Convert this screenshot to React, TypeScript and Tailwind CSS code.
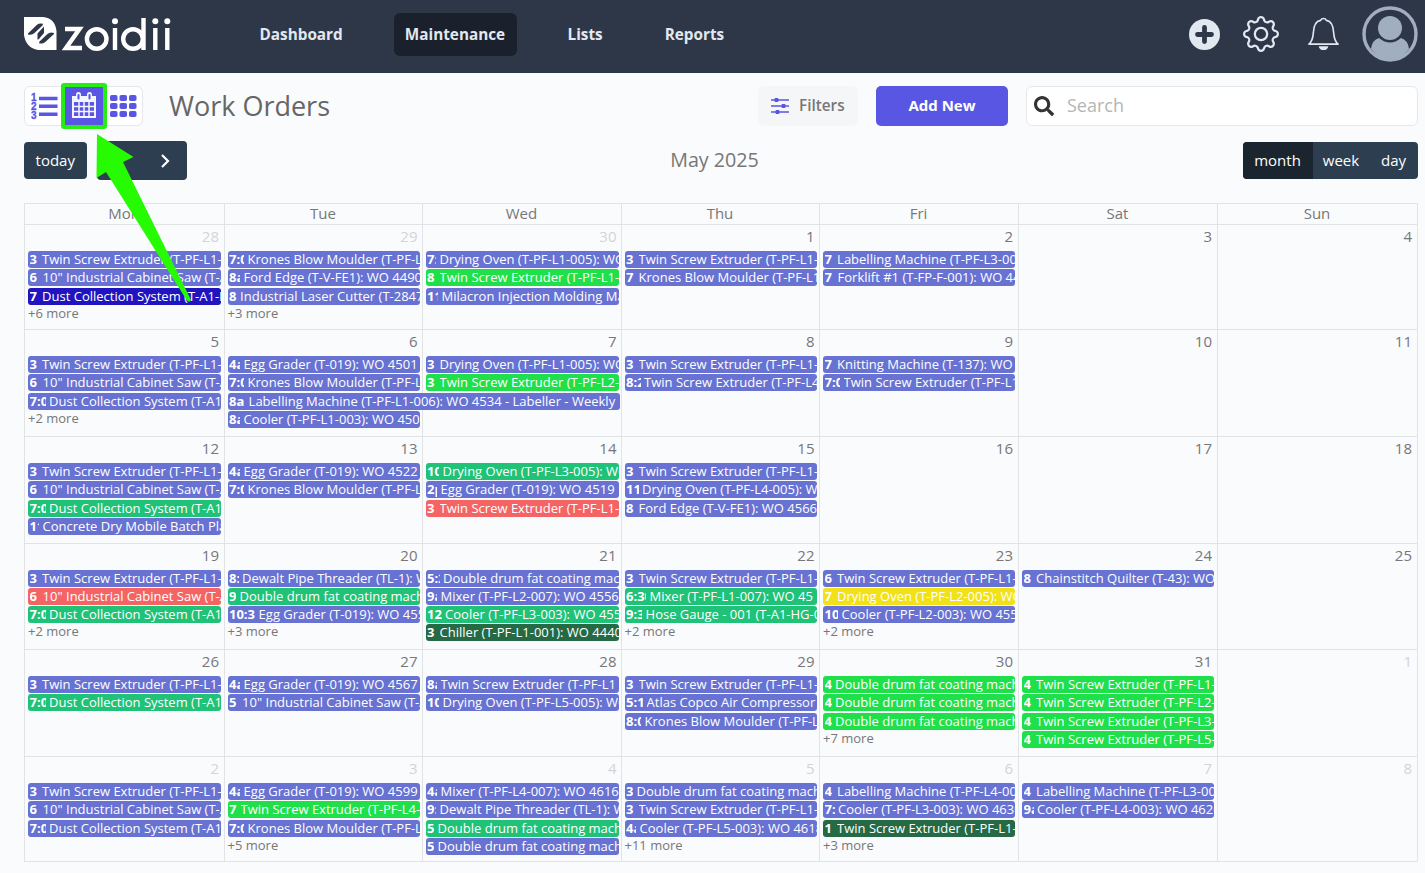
import React from "react";
import { FaSearch } from "react-icons/fa";
import { BsGear } from "react-icons/bs";

type Color = "b" | "g" | "t" | "n" | "r" | "y" | "d";
const BG: Record<Color, string> = {
  b: "bg-[#6772d2]",
  g: "bg-[#1fdf4a]",
  t: "bg-[#1fc277]",
  n: "bg-[#1f14c0]",
  r: "bg-[#f46464]",
  y: "bg-[#f2e116]",
  d: "bg-[#256a45]",
};
// colour, start time, visible width of the time, title, optional column span
type Ev = [Color, string, number, string, number?];
type Day = { n: number; out?: boolean; more?: number; ev?: Ev[] };

const TWIN = "Twin Screw Extruder (T-PF-L1-001): WO";
const twin = (l: number) => `Twin Screw Extruder (T-PF-L${l}-001): WO`;
const SAW = '10" Industrial Cabinet Saw (T-A1-002)';
const DUST = "Dust Collection System (T-A1-DC): WO";
const KRONES = "Krones Blow Moulder (T-PF-L1-002): WO";
const DRUM = "Double drum fat coating machine (T-PF)";

const WEEKS: Day[][] = [
  [
    { n: 28, out: true, more: 6, ev: [["b", "3", 9, TWIN], ["b", "6", 9.5, SAW], ["n", "7", 9, DUST]] },
    { n: 29, out: true, more: 3, ev: [["b", "7:00", 15, KRONES], ["b", "8a", 11, "Ford Edge (T-V-FE1): WO 4490 - Ford"], ["b", "8", 7.5, "Industrial Laser Cutter (T-2847): WO"]] },
    { n: 30, out: true, ev: [["b", "7:", 9, "Drying Oven (T-PF-L1-005): WO 4500"], ["g", "8", 9, TWIN], ["b", "11", 11, "Milacron Injection Molding Machine"]] },
    { n: 1, ev: [["b", "3", 9, TWIN], ["b", "7", 9, KRONES]] },
    { n: 2, ev: [["b", "7", 9, "Labelling Machine (T-PF-L3-006): WO"], ["b", "7", 9.5, "Forklift #1 (T-FP-F-001): WO 4498"]] },
    { n: 3 },
    { n: 4 },
  ],
  [
    { n: 5, more: 2, ev: [["b", "3", 9, TWIN], ["b", "6", 9.5, SAW], ["b", "7:00", 16, DUST]] },
    { n: 6, ev: [["b", "4a", 11, "Egg Grader (T-019): WO 4501 - Egg"], ["b", "7:00", 15, KRONES], ["b", "8a", 16, "Labelling Machine (T-PF-L1-006): WO 4534 - Labeller - Weekly", 2], ["b", "8a", 11, "Cooler (T-PF-L1-003): WO 4503"]] },
    { n: 7, ev: [["b", "3", 9, "Drying Oven (T-PF-L1-005): WO 4502"], ["g", "3", 9, twin(2)]] },
    { n: 8, ev: [["b", "3", 9, TWIN], ["b", "8:20", 14.5, twin(4)]] },
    { n: 9, ev: [["b", "7", 9, "Knitting Machine (T-137): WO 4510"], ["b", "7:00", 15.5, twin(1)]] },
    { n: 10 },
    { n: 11 },
  ],
  [
    { n: 12, ev: [["b", "3", 9, TWIN], ["b", "6", 9.5, SAW], ["t", "7:00", 16, DUST], ["b", "11", 9.5, "Concrete Dry Mobile Batch Plant"]] },
    { n: 13, ev: [["b", "4a", 11, "Egg Grader (T-019): WO 4522 - Egg"], ["b", "7:00", 15, KRONES]] },
    { n: 14, ev: [["t", "10", 12, "Drying Oven (T-PF-L3-005): WO 4530"], ["b", "2p", 10, "Egg Grader (T-019): WO 4519"], ["r", "3", 9, TWIN]] },
    { n: 15, ev: [["b", "3", 9, TWIN], ["b", "11", 12.5, "Drying Oven (T-PF-L4-005): WO 4540"], ["b", "8", 9, "Ford Edge (T-V-FE1): WO 4566 - Ford"]] },
    { n: 16 },
    { n: 17 },
    { n: 18 },
  ],
  [
    { n: 19, more: 2, ev: [["b", "3", 9, TWIN], ["r", "6", 9.5, SAW], ["t", "7:00", 16, DUST]] },
    { n: 20, more: 3, ev: [["b", "8:", 9.5, "Dewalt Pipe Threader (TL-1): WO 45"], ["t", "9", 7, DRUM], ["b", "10:30", 26, "Egg Grader (T-019): WO 4553"]] },
    { n: 21, ev: [["b", "5:20", 12.5, DRUM], ["b", "9a", 10, "Mixer (T-PF-L2-007): WO 4556"], ["t", "12", 14.5, "Cooler (T-PF-L3-003): WO 4559"], ["d", "3", 9, "Chiller (T-PF-L1-001): WO 4440"]] },
    { n: 22, more: 2, ev: [["b", "3", 9, TWIN], ["t", "6:30", 20, "Mixer (T-PF-L1-007): WO 45"], ["t", "9:30", 16, "Hose Gauge - 001 (T-A1-HG-001)"]] },
    { n: 23, more: 2, ev: [["b", "6", 9, TWIN], ["y", "7", 9, "Drying Oven (T-PF-L2-005): WO 4550"], ["b", "10", 13.5, "Cooler (T-PF-L2-003): WO 4555"]] },
    { n: 24, ev: [["b", "8", 9, "Chainstitch Quilter (T-43): WO 4560"]] },
    { n: 25 },
  ],
  [
    { n: 26, ev: [["b", "3", 9, TWIN], ["t", "7:00", 16, DUST]] },
    { n: 27, ev: [["b", "4a", 11, "Egg Grader (T-019): WO 4567 - Egg"], ["b", "5", 9.5, SAW]] },
    { n: 28, ev: [["b", "8a", 10, "Twin Screw Extruder (T-PF-L1"], ["b", "10", 12, "Drying Oven (T-PF-L5-005): WO 4570"]] },
    { n: 29, ev: [["b", "3", 9, TWIN], ["b", "5:15", 17, "Atlas Copco Air Compressor"], ["b", "8:00", 15, KRONES]] },
    { n: 30, more: 7, ev: [["g", "4", 7, DRUM], ["g", "4", 7, DRUM], ["g", "4", 7, DRUM]] },
    { n: 31, ev: [["g", "4", 9, twin(1)], ["g", "4", 9, twin(2)], ["g", "4", 9, twin(3)], ["g", "4", 9, twin(5)]] },
    { n: 1, out: true },
  ],
  [
    { n: 2, out: true, ev: [["b", "3", 9, TWIN], ["b", "6", 9.5, SAW], ["b", "7:00", 16, DUST]] },
    { n: 3, out: true, more: 5, ev: [["b", "4a", 11, "Egg Grader (T-019): WO 4599 - Egg"], ["g", "7", 8, twin(4)], ["b", "7:00", 15, KRONES]] },
    { n: 4, out: true, ev: [["b", "4a", 10, "Mixer (T-PF-L4-007): WO 4616"], ["b", "9:", 9, "Dewalt Pipe Threader (TL-1): WO 46"], ["t", "5", 7, DRUM], ["b", "5", 7, DRUM]] },
    { n: 5, out: true, more: 11, ev: [["b", "3", 7, DRUM], ["b", "3", 9, TWIN], ["b", "4a", 10, "Cooler (T-PF-L5-003): WO 4618"]] },
    { n: 6, out: true, more: 3, ev: [["b", "4", 9, "Labelling Machine (T-PF-L4-006): WO"], ["b", "7:", 10, "Cooler (T-PF-L3-003): WO 4630"], ["d", "1", 9, TWIN]] },
    { n: 7, out: true, ev: [["b", "4", 9, "Labelling Machine (T-PF-L3-006): WO"], ["b", "9a", 10, "Cooler (T-PF-L4-003): WO 4620"]] },
    { n: 8, out: true },
  ],
];

const COLS = "grid grid-cols-[200px_198px_199px_198px_199px_199px_200px]";

function Event({ ev }: { ev: Ev }) {
  const [color, time, width, title, span] = ev;
  return (
    <div
      className={`${BG[color]} ${span ? "relative z-10 w-[392px]" : ""} mb-[1.3px] flex h-[17px] shrink-0 overflow-hidden rounded-[3px] pl-[1.500px] text-[13px] leading-[17px] whitespace-nowrap text-white`}
    >
      <span className="shrink-0 overflow-hidden font-bold" style={{ width }}>{time}</span>
      <span className="ml-[3.600px] min-w-0 flex-1 overflow-hidden">{title}</span>
    </div>
  );
}

function Logo() {
  return (
    <svg width="148" height="40" viewBox="0 0 148 40" className="block" fill="none">
      <path d="M0 3H19Q31 4 32.500 17V36H14Q2 34 0 21Z" fill="#fff" />
      <g fill="#2d3748">
        <path d="M4 19.500 13 10.800Q15 9 19 9.700L18.500 11.500 10.500 19Q8 21.500 4 20.500Z" />
        <path d="M20 12.500V19L14.500 25.500Q13 26 13.500 24V19.500Z" />
        <path d="M30 20 21 28.200Q19 30 15 29.300L15.500 27.500 23.500 20Q26 17.500 30 19Z" />
      </g>
      <g stroke="#fff" strokeWidth="4.400">
        <path d="M41 15H55.500L42 34H58" />
        <circle cx="72.700" cy="25" r="9.800" />
        <path d="M91 14V36M131.300 14V36M143.300 14V36M119.500 4V36" />
        <circle cx="109" cy="25" r="9.800" />
      </g>
      <g fill="#fff">
        <circle cx="91" cy="7.300" r="3" />
        <circle cx="131.300" cy="7.300" r="3" />
        <circle cx="143.300" cy="7.300" r="3" />
      </g>
    </svg>
  );
}

function NumberedList() {
  return (
    <svg className="ml-[5px] shrink-0" width="28" height="28" viewBox="0 0 28 28" fill="currentColor">
      <path d="M9 4.800H27.500V8.300H9ZM9 12.600H27.500V16.100H9ZM9 20.400H27.500V23.900H9Z" />
      <g className="font-['Liberation_Sans',sans-serif] text-[10px] font-bold" stroke="currentColor" strokeWidth="0.300">
        <text x="1" y="8.800">1</text>
        <text x="1" y="18">2</text>
        <text x="1" y="27.200">3</text>
      </g>
    </svg>
  );
}

export default function App() {
  return (
    <div className="relative h-[873px] w-[1425px] overflow-hidden bg-[#fafbfd] font-['Open_Sans','Noto_Sans',sans-serif] text-[#666]">
      <header className="flex h-[72.500px] items-center justify-between bg-[#2d3748] pr-[7.500px] pl-[23.500px]">
        <div className="flex items-center pb-1">
          <Logo />
          <nav className="ml-[64px] flex items-center text-[15.300px] font-bold text-[#e2e8f0]">
            <span className="w-[158px] pl-[24px]">Dashboard</span>
            <span className="flex h-[43px] w-[123px] items-center justify-center rounded-md bg-[#1a202c]">Maintenance</span>
            <span className="ml-[51px]">Lists</span>
            <span className="ml-[62px]">Reports</span>
          </nav>
        </div>
        <div className="flex items-center pb-1">
          <svg width="31" height="31" viewBox="0 0 31 31"><circle cx="15.500" cy="15.500" r="15.500" fill="#e2e8f0" /><path d="M15.500 8.500V22.500M8.500 15.500H22.500" stroke="#2d3748" strokeWidth="4.800" strokeLinecap="round" /></svg>
          <BsGear className="ml-[23px] size-9 text-[#e2e8f0]" />
          <svg className="ml-7" width="33" height="36" viewBox="0 0 34 36" fill="none"><path d="M2 28.500Q6 25 6.500 17Q7 5 14 4Q15 2 17 2Q19 2 20 4Q27 5 27.500 17Q28 25 32 28.500Z" stroke="#e2e8f0" strokeWidth="1.700" strokeLinejoin="round" /><path d="M12 30.500H22Q21 34.500 17 34.500Q13 34.500 12 30.500" fill="#e2e8f0" /></svg>
          <svg className="ml-[22px]" width="56" height="56" viewBox="0 0 56 56"><circle cx="28" cy="28" r="26" fill="none" stroke="#a0aec0" strokeWidth="3.400" /><circle cx="28" cy="22" r="12" fill="#a0aec0" /><path d="M9 43Q10 34 17 32Q28 41 39 32Q46 34 47 43Q39 54 28 54Q17 54 9 43" fill="#a0aec0" /></svg>
        </div>
      </header>

      <section className="mt-[12.500px] flex h-[41px] items-center pr-[7px] pl-6">
        <div className="flex h-10 w-[119px] items-center rounded-md border border-[#e5e7eb] bg-white text-[#5956e4]">
          <NumberedList />
          <div className="ml-[3px] flex h-[46px] w-[46px] shrink-0 items-center justify-center rounded-[3px] border-4 border-[#27ee12] bg-[#5956e4]">
            <svg width="26" height="27" viewBox="0 0 26 27"><path d="M1 4H25V26H1Z" fill="#f5f5ff" /><path d="M3 10H23V24H3Z" fill="#5956e4" /><path d="M3 14.500H23M3 19.500H23M8 10V25M13 10V25M18 10V25" stroke="#f5f5ff" strokeWidth="1.500" /><path d="M7.500 7V2.500M18.500 7V2.500" stroke="#f5f5ff" strokeWidth="5" strokeLinecap="round" /><path d="M7.500 6.500V3M18.500 6.500V3" stroke="#5956e4" strokeWidth="2" strokeLinecap="round" /></svg>
          </div>
          <svg className="ml-[2.500px] shrink-0" width="27" height="22" viewBox="0 0 27 22" fill="currentColor">
            {[0, 9.5, 19].map((x) => [0, 8, 16].map((y) => <rect key={`${x}-${y}`} x={x} y={y} width="7.500" height="6" rx="1.800" />))}
          </svg>
        </div>
        <h1 className="ml-[26px] w-[589px] text-[27px] leading-none font-medium text-[#666]">Work Orders</h1>
        <button className="flex h-10 w-[100px] items-center rounded-md bg-[#f5f6f7] pl-[13px] text-[15px] font-semibold text-[#777]">
          <svg width="18" height="18" viewBox="0 0 18 18" stroke="#5956e4" fill="#5956e4"><path d="M0 3H18M0 9H18M0 15H18" strokeWidth="1.300" /><path d="M4 1.500H7V4.500H4ZM11 7.500H14V10.500H11ZM5 13.500H8V16.500H5Z" strokeWidth="1" /></svg>
          <span className="ml-[10px] text-[15.300px]">Filters</span>
        </button>
        <button className="ml-[18px] h-10 w-[132px] rounded-[5px] bg-[#5956e4] pb-px text-[15px] font-bold text-white">Add New</button>
        <div className="ml-[18px] flex h-10 w-[392px] items-center rounded-md border border-[#e5e7eb] bg-white pl-[7px]">
          <FaSearch className="size-[20px] text-[#333]" />
          <span className="ml-[13px] text-[18px] text-[#b5b5b5]">Search</span>
        </div>
      </section>

      <section className="mt-[14px] flex h-10 items-center pr-[7.500px] pl-6 text-[15px] text-white">
        <button className="h-[37px] w-[62.500px] rounded bg-[#2c3e50]">today</button>
        <button className="ml-[10px] flex h-[39px] w-[90px] items-center justify-end rounded bg-[#2c3e50] pt-px pr-[17px]">
          <svg width="10" height="16" viewBox="0 0 10 16" fill="none"><path d="M2 2 8 8 2 14" stroke="#fff" strokeWidth="2.200" /></svg>
        </button>
        <h2 className="flex-1 text-center text-[20px] leading-none text-[#777]"><span className="inline-block text-[19.700px]">May 2025</span></h2>
        <div className="flex h-[37px] w-[175px] overflow-hidden rounded bg-[#2c3e50] leading-[36px]">
          <span className="w-[70px] bg-[#1a252f] text-center">month</span>
          <span className="w-[57px] text-center">week</span>
          <span className="w-[48px] text-center">day</span>
        </div>
      </section>

      <main className="mt-[23px] ml-6 w-[1394px] border-t border-l border-[#e1e3e5]">
        <div className={`${COLS} h-[21px] text-center text-[15px] leading-[18px]`}>
          {["Mon", "Tue", "Wed", "Thu", "Fri", "Sat", "Sun"].map((d) => (
            <div key={d} className="border-r border-b border-[#e1e3e5] pr-px text-[#777]">{d}</div>
          ))}
        </div>
        <div className="grid grid-rows-[105px_107px_106.500px_106.500px_107px_105px]">
          {WEEKS.map((week, i) => (
            <div key={i} className={COLS}>
              {week.map((day, j) => (
                <div key={j} className={`flex min-w-0 flex-col border-r border-b border-[#e1e3e5] ${j === 0 ? "pr-[3px] pl-[3px]" : j > 3 ? "pr-[3px] pl-[3px]" : "pr-[2.500px] pl-[2.500px]"}`}>
                  <div className={`h-[26px] shrink-0 pr-[2px] text-right text-[15px] leading-[22px] ${day.out ? "text-[#d3d4d6]" : "text-[#777]"}`}>{day.n}</div>
                  {day.ev?.map((ev, k) => <Event key={k} ev={ev} />)}
                  {day.more && <div className="text-[13px] leading-[15px] text-[#777]">+{day.more} more</div>}
                </div>
              ))}
            </div>
          ))}
        </div>
      </main>

      <svg className="pointer-events-none absolute top-[130px] left-[90px] z-20" width="110" height="180" viewBox="90 130 110 180">
        <path d="M97 134 133.500 157 123 162 191 300Q189 304 186 299L106 172 96.500 178Z" fill="#27fb02" />
      </svg>
    </div>
  );
}
